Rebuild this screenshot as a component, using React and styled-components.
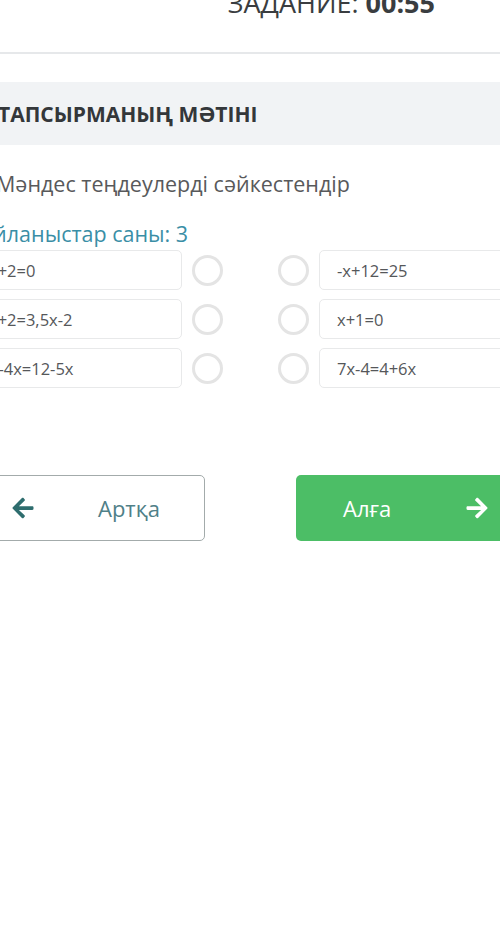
import React from "react"
import styled, { createGlobalStyle } from "styled-components"
import { FaArrowLeft, FaArrowRight } from "react-icons/fa"

const GlobalStyle = createGlobalStyle`
  html, body {
    margin: 0;
    padding: 0;
    background: #fff;
    overflow: hidden;
  }
  body {
    font-family: "Open Sans", "Noto Sans", sans-serif;
    color: #333;
  }
`

const left = [{ id: 1, text: "x+2=0" }, { id: 2, text: "x+2=3,5x-2" }, { id: 3, text: "8-4x=12-5x" }]
const right = [{ id: 1, text: "-x+12=25" }, { id: 2, text: "x+1=0" }, { id: 3, text: "7x-4=4+6x" }]

const App = () => {
  return (
    <>
      <GlobalStyle />
      <StyledPage>
        <Header>
          <Timer>
            ЗАДАНИЕ: <strong>00:55</strong>
          </Timer>
        </Header>

        <Content>
          <SectionBar>
            <h2>ТАПСЫРМАНЫҢ МӘТІНІ</h2>
          </SectionBar>

          <Question>Мәндес теңдеулерді сәйкестендір</Question>
          <Count>Байланыстар саны: 3</Count>

          <Matches>
            {left.map((item, i) => (
              <Row key={item.id}>
                <Option $pad={13}>{item.text}</Option>
                <Radio />
                <Radio $far />
                <Option>{right[i].text}</Option>
              </Row>
            ))}
          </Matches>

          <Nav>
            <BackButton>
              <FaArrowLeft />
              <span>Артқа</span>
            </BackButton>
            <NextButton>
              <span>Алға</span>
              <FaArrowRight />
            </NextButton>
          </Nav>
        </Content>
      </StyledPage>
    </>
  )
}

export default App

const StyledPage = styled.div`
  width: 500px;
  min-height: 937px;
`

const Header = styled.header`
  height: 52px;
  display: flex;
  justify-content: flex-end;
  align-items: flex-start;
  padding-right: 65px;
  border-bottom: 2px solid #e6e8ea;
  overflow: hidden;
`

const Timer = styled.div`
  margin-top: -11px;
  font-size: 27px;
  line-height: 27px;
  color: #3a3d40;
  white-space: nowrap;

  strong {
    font-weight: 700;
  }
`

const Content = styled.main`
  width: 560px;
  margin-left: -30px;
  padding-top: 28px;
`

const SectionBar = styled.div`
  height: 63px;
  background: #f1f3f5;
  display: flex;
  align-items: center;
  padding-left: 28px;

  h2 {
    margin: 0;
    font-size: 21px;
    font-weight: 700;
    color: #34373a;
  }
`

const Question = styled.p`
  margin: 25px 0 0;
  padding-left: 26px;
  font-size: 21.5px;
  line-height: 28px;
  color: #58595b;
`

const Count = styled.p`
  margin: 22px 0 0 -2px;
  font-size: 21.5px;
  line-height: 28px;
  color: #3a8ea6;
`

const Matches = styled.div`
  display: flex;
  flex-direction: column;
  gap: 9px;
  margin-top: 2px;
  padding-left: 5px;
`

const Row = styled.div`
  display: flex;
  align-items: center;
`

const Option = styled.div`
  width: 207px;
  height: 40px;
  flex-shrink: 0;
  box-sizing: border-box;
  border: 1px solid #e8e9ea;
  border-radius: 5px;
  display: flex;
  align-items: center;
  padding-left: ${({ $pad }) => $pad ?? 17}px;
  font-size: 16.5px;
  color: #55575a;
  background: #fff;
`

const Radio = styled.div`
  width: 31px;
  height: 31px;
  flex-shrink: 0;
  box-sizing: border-box;
  margin: ${({ $far }) => ($far ? "0 10px 0 55px" : "0 0 0 10px")};
  border: 3px solid #e4e4e4;
  border-radius: 50%;
`

const Nav = styled.div`
  display: flex;
  gap: 91px;
  margin-top: 87px;
`

const Button = styled.button`
  width: 240px;
  height: 66px;
  flex-shrink: 0;
  box-sizing: border-box;
  border-radius: 5px;
  display: flex;
  align-items: center;
  font-family: "Open Sans", "Noto Sans", sans-serif;
  font-size: 22px;
  cursor: pointer;

  svg {
    width: 22px;
    height: 24px;
  }
`

const BackButton = styled(Button)`
  margin-left: -5px;
  border: 1.5px solid #a3abab;
  background: #fff;
  color: #4f8088;
  padding-left: 46px;
  gap: 64px;

  svg {
    color: #2e6d6e;
  }
`

const NextButton = styled(Button)`
  border: none;
  background: #4cbe66;
  color: #fff;
  padding-left: 47px;
  padding-right: 48px;
  justify-content: space-between;
`
